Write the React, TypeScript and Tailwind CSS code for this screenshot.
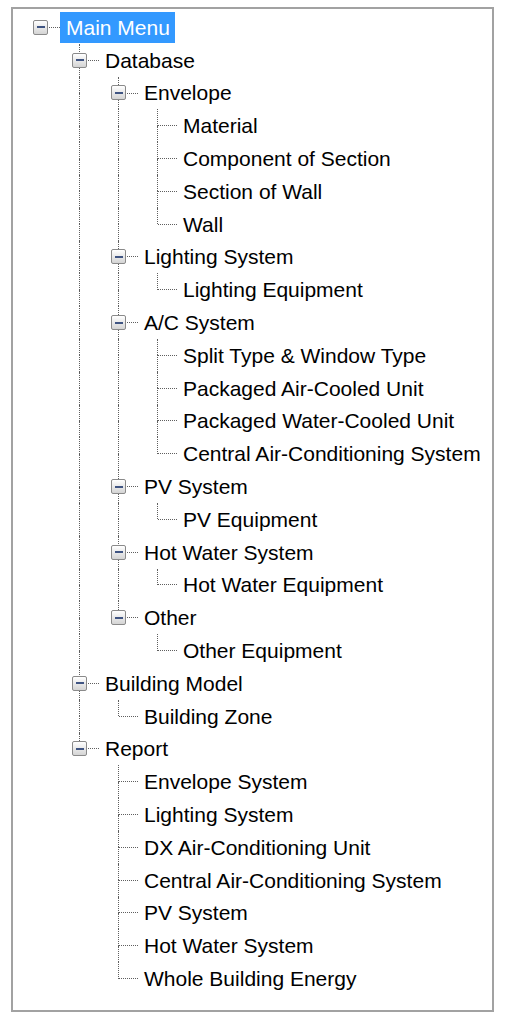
import React from "react";

type Node = { label: string; children?: Node[] };

const tree: Node = {
  label: "Main Menu",
  children: [
    {
      label: "Database",
      children: [
        {
          label: "Envelope",
          children: [
            { label: "Material" },
            { label: "Component of Section" },
            { label: "Section of Wall" },
            { label: "Wall" },
          ],
        },
        { label: "Lighting System", children: [{ label: "Lighting Equipment" }] },
        {
          label: "A/C System",
          children: [
            { label: "Split Type & Window Type" },
            { label: "Packaged Air-Cooled Unit" },
            { label: "Packaged Water-Cooled Unit" },
            { label: "Central Air-Conditioning System" },
          ],
        },
        { label: "PV System", children: [{ label: "PV Equipment" }] },
        { label: "Hot Water System", children: [{ label: "Hot Water Equipment" }] },
        { label: "Other", children: [{ label: "Other Equipment" }] },
      ],
    },
    { label: "Building Model", children: [{ label: "Building Zone" }] },
    {
      label: "Report",
      children: [
        { label: "Envelope System" },
        { label: "Lighting System" },
        { label: "DX Air-Conditioning Unit" },
        { label: "Central Air-Conditioning System" },
        { label: "PV System" },
        { label: "Hot Water System" },
        { label: "Whole Building Energy" },
      ],
    },
  ],
};

type Row = {
  label: string;
  level: number;
  hasChildren: boolean;
  isLast: boolean;
  ancestorsLast: boolean[];
};

function flatten(node: Node, level: number, isLast: boolean, ancestorsLast: boolean[], out: Row[]) {
  out.push({ label: node.label, level, hasChildren: !!node.children?.length, isLast, ancestorsLast });
  const kids = node.children ?? [];
  kids.forEach((c, i) => {
    flatten(c, level + 1, i === kids.length - 1, level >= 1 ? [...ancestorsLast, isLast] : [], out);
  });
}

const rows: Row[] = [];
flatten(tree, 0, true, [], rows);

const DOT = "border-dotted border-[#5f5f5f]";

function ExpandBox() {
  return (
    <span className="col-start-1 row-start-1 place-self-center w-[15px] h-[15px] border border-[#8a8a8a] rounded-[2px] bg-linear-to-b from-white to-[#d4d4d4] flex items-center justify-center">
      <span className="block w-[8px] h-[2px] bg-[#3f5482]" />
    </span>
  );
}

function Cell({ top, bottom, horiz, box }: { top: boolean; bottom: boolean; horiz: boolean; box: boolean }) {
  return (
    <span className="grid w-[39px] h-full shrink-0">
      <span className="col-start-1 row-start-1 flex h-full">
        <span className="w-[19px] shrink-0" />
        <span className="flex flex-col w-px shrink-0">
          <span className={"flex-1 " + (top ? "border-l " + DOT : "")} />
          <span className={"flex-1 " + (bottom ? "border-l " + DOT : "")} />
        </span>
        <span className="flex flex-col flex-1">
          <span className={"flex-1 " + (horiz ? "border-b " + DOT : "")} />
          <span className="flex-1" />
        </span>
      </span>
      {box && <ExpandBox />}
    </span>
  );
}

function TreeRow({ row, index }: { row: Row; index: number }) {
  const cells: React.ReactNode[] = [];
  for (let k = 0; k <= row.level; k++) {
    if (k === row.level) {
      cells.push(
        <Cell
          key={k}
          top={row.level >= 1}
          bottom={row.level >= 1 && !row.isLast}
          horiz
          box={row.hasChildren}
        />
      );
    } else {
      const show = k >= 1 && !row.ancestorsLast[k - 1];
      cells.push(<Cell key={k} top={show} bottom={show} horiz={false} box={false} />);
    }
  }
  const selected = index === 0;
  return (
    <div className="flex items-center h-[32.8px]">
      {cells}
      <span
        className={
          "flex items-center h-[31px] pl-[6px] pr-[5px] whitespace-nowrap " +
          (selected ? "bg-[#3399ff] text-white" : "text-black")
        }
      >
        {row.label}
      </span>
    </div>
  );
}

export default function App() {
  return (
    <div
      className="w-[507px] h-[1024px] bg-white pt-[7px] pl-[11px]"
      style={{ fontFamily: '"Liberation Sans", Arial, sans-serif' }}
    >
      <div className="w-[483px] h-[1005px] border-2 border-[#a2a2a2] bg-white pt-[2px] pl-[8px] text-[21px] leading-none overflow-hidden">
        {rows.map((r, i) => (
          <TreeRow key={i} row={r} index={i} />
        ))}
      </div>
    </div>
  );
}
